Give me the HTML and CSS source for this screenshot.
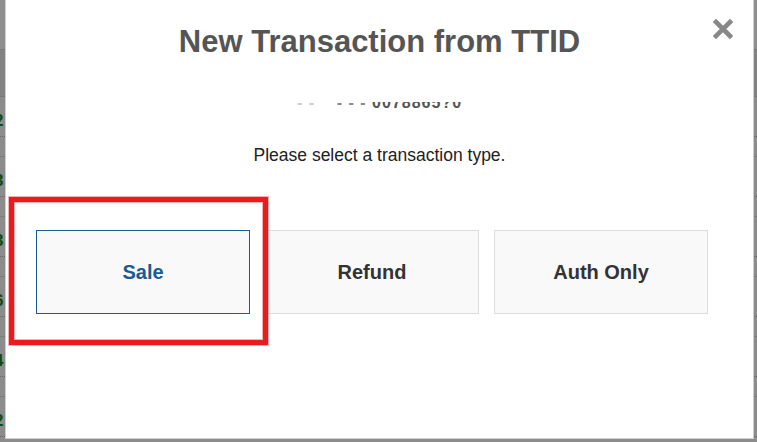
FILE: index.html
```html
<!DOCTYPE html>
<html>
<head>
<meta charset="utf-8">
<link rel="stylesheet" href="styles.css">
</head>
<body>
<div class="page">
  <div class="bg">
    <div class="bg-top"></div>
    <div class="bg-head"></div>
    <div class="bg-row"><div class="cell-a"><span class="num">2</span></div><div class="cell-b"></div></div>
    <div class="bg-row"><div class="cell-a"><span class="num">3</span></div><div class="cell-b"></div></div>
    <div class="bg-row"><div class="cell-a"><span class="num">3</span></div><div class="cell-b"></div></div>
    <div class="bg-row"><div class="cell-a"><span class="num">6</span></div><div class="cell-b"></div></div>
    <div class="bg-row"><div class="cell-a"><span class="num">4</span></div><div class="cell-b"></div></div>
    <div class="bg-row"><div class="cell-a"><span class="num">2</span></div><div class="cell-b"></div></div>
  </div>

  <div class="modal">
    <h1 class="title">New Transaction from TTID</h1>
    <button class="close" aria-label="Close">
      <svg width="20" height="20" viewBox="0 0 20 20"><path d="M3 3 L17 17 M17 3 L3 17" stroke="#888" stroke-width="4.6" stroke-linecap="square"/></svg>
    </button>
    <div class="tid"><div class="tid-inner"><span class="faint">- -</span>&nbsp;&nbsp;&nbsp;&nbsp;<span class="mid">- - -</span> 0078865?0</div></div>
    <p class="prompt">Please select a transaction type.</p>
    <div class="choices">
      <button class="choice active">Sale</button>
      <button class="choice">Refund</button>
      <button class="choice">Auth Only</button>
    </div>
    <div class="highlight"></div>
  </div>
</div>
</body>
</html>
```

FILE: styles.css
```css
html, body {
  margin: 0;
  padding: 0;
  width: 757px;
  height: 442px;
  overflow: hidden;
  background: #8b8b8b;
  font-family: "Liberation Sans", Arial, sans-serif;
}

.page {
  position: relative;
  width: 757px;
  height: 442px;
}

.bg {
  display: flex;
  flex-direction: column;
  width: 757px;
}

.bg-top {
  height: 49px;
  background: #8f8f8f;
  border-bottom: 1px solid #7a7a7a;
}

.bg-head {
  height: 46px;
  background: #828282;
  border-bottom: 1px solid #777;
}

.bg-row {
  display: flex;
  flex-direction: column;
  height: 59px;
  border-bottom: 1px solid #7c7c7c;
  background: #8c8c8c;
}

.cell-a {
  height: 40px;
  border-bottom: 1px dotted #666;
  display: flex;
  align-items: center;
  padding-top: 8px;
  box-sizing: border-box;
}

.cell-b {
  height: 18px;
}

.num {
  margin-left: -6px;
  font-weight: bold;
  font-size: 17px;
  color: #0f4a0f;
}

.modal {
  position: absolute;
  left: 5px;
  top: 0;
  width: 747px;
  height: 438px;
  background: #fff;
  border: 1px solid #cfcfcf;
  border-top: none;
  text-align: center;
}

.title {
  margin: 0;
  padding-top: 24px;
  font-size: 31px;
  line-height: 36px;
  font-weight: bold;
  color: #555;
}

.close {
  position: absolute;
  left: 706px;
  top: 18px;
  width: 22px;
  height: 22px;
  padding: 0;
  border: none;
  background: none;
  display: flex;
  align-items: center;
  justify-content: center;
}

.tid {
  margin: 42px auto 0;
  height: 7px;
  overflow: hidden;
}

.tid-inner {
  margin-top: -7px;
  font-size: 16px;
  line-height: 16px;
  font-weight: bold;
  color: #555;
  letter-spacing: 1px;
  white-space: pre;
}

.faint { color: #ccc; }
.mid { color: #888; }

.prompt {
  margin: 36px 0 0;
  font-size: 17.5px;
  line-height: 20px;
  color: #222;
}

.choices {
  display: flex;
  gap: 15px;
  margin-top: 65px;
  padding-left: 30px;
}

.choice {
  width: 214px;
  height: 84px;
  box-sizing: border-box;
  border: 1px solid #dddddd;
  background: #f9f9f9;
  font-family: "Liberation Sans", Arial, sans-serif;
  font-size: 20px;
  font-weight: bold;
  color: #333;
  padding: 0;
}

.choice.active {
  border-color: #1d5a8f;
  color: #1d5a8f;
}

.highlight {
  position: absolute;
  left: 3px;
  top: 197px;
  width: 259px;
  height: 148px;
  box-sizing: border-box;
  border: 5px solid #e81c1f;
  box-shadow: 0 0 0 1px rgba(232, 28, 31, 0.35), inset 0 0 0 1px rgba(232, 28, 31, 0.35);
}
```
